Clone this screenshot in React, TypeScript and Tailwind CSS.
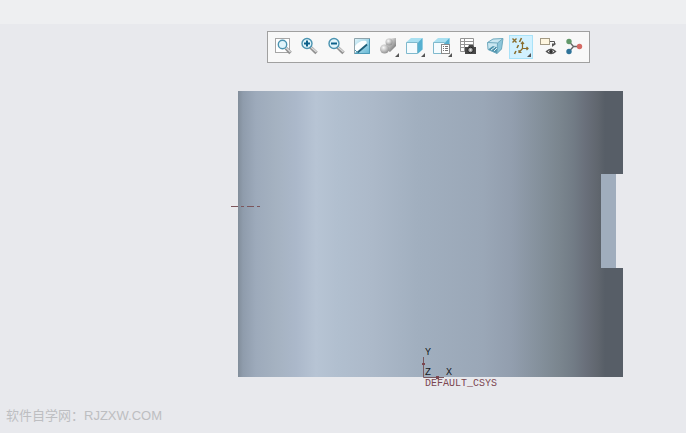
import type { ReactNode } from "react";

function Magnifier({ children, small = false }: { children?: ReactNode; small?: boolean }) {
  const cx = small ? 11.5 : 10;
  const cy = small ? 9.5 : 8.5;
  const r = small ? 4.2 : 5;
  return (
    <>
      <path d={`M${cx + 3.4} ${cy + 3.6} L19.500 18`} stroke="#8f8f8f" strokeWidth="3.400" />
      <path d={`M${cx + 3.8} ${cy + 3.4} L19.500 17`} stroke="#dcdcdc" strokeWidth="1.400" />
      <circle cx={cx} cy={cy} r={r} fill="#e2f5fb" stroke="#4b93b0" strokeWidth="1.400" />
      {children}
    </>
  );
}

function Cube() {
  return (
    <>
      <path d="M3.500 7 L8 3 H19.500 V14.500 L15 18.500 H3.500 Z" fill="#a9e0f1" />
      <path d="M15 7.500 L19.500 3 V14.500 L15 18.500 Z" fill="#56b0d0" />
      <path d="M3.500 7.500 H14.500 V18.500 H3.500 Z" fill="#f4fbfe" stroke="#7fb9cd" />
    </>
  );
}

const More = () => <path d="M22 18 V22 H18 Z" fill="#555" />;

const tools: { label: string; active?: boolean; icon: ReactNode }[] = [
  {
    label: "Refit",
    icon: (
      <>
        <rect x="4.500" y="3.500" width="14" height="14" fill="#fff" stroke="#a6a6a6" />
        <Magnifier small />
      </>
    ),
  },
  {
    label: "Zoom In",
    icon: (
      <Magnifier>
        <path d="M7 8.500 H13 M10 5.500 V11.500" stroke="#0c608a" strokeWidth="2" />
      </Magnifier>
    ),
  },
  {
    label: "Zoom Out",
    icon: (
      <Magnifier>
        <path d="M7 8.500 H13" stroke="#0c608a" strokeWidth="2" />
      </Magnifier>
    ),
  },
  {
    label: "Repaint",
    icon: (
      <>
        <rect x="4" y="3" width="16" height="16" fill="url(#repaint)" />
        <path d="M5 17 V11 C8 7 12 5 16 6 C18 8 16 11 8 17 Z" fill="#fbfeff" />
        <path d="M7 18 L17 9.500" stroke="#1d5f7a" strokeWidth="1.800" />
        <path d="M5 15 L8 18" stroke="#4f9ab5" />
        <path d="M4.500 19 V3.500 H20" stroke="#8fa3ab" />
        <path d="M19.500 4 V18.500 H5" stroke="#4e9ab6" />
      </>
    ),
  },
  {
    label: "Rendering Options",
    icon: (
      <>
        <path d="M9 8 L12 3.500 L19 3 V11 L13 17 L8 14 Z" fill="url(#shade)" />
        <circle cx="12" cy="7" r="3.500" fill="url(#sphere)" />
        <circle cx="7.500" cy="14" r="4.500" fill="url(#sphere)" />
        <More />
      </>
    ),
  },
  {
    label: "Display Style",
    icon: (
      <>
        <Cube />
        <More />
      </>
    ),
  },
  {
    label: "Saved Orientations",
    icon: (
      <>
        <Cube />
        <rect x="11.500" y="9.500" width="8" height="9" fill="#fff" stroke="#8a8a8a" />
        <path d="M13 11.500 H14 M15 11.500 H18 M13 13.500 H14 M15 13.500 H18 M13 15.500 H14 M15 15.500 H18" stroke="#777" />
        <More />
      </>
    ),
  },
  {
    label: "View Manager",
    icon: (
      <>
        <path d="M4.500 3.500 H17.500 V16.500 H4.500 Z M4.500 6.500 H17.500 M4.500 9.500 H17.500 M4.500 12.500 H17.500 M8.500 3.500 V16.500" fill="#fff" stroke="#949494" />
        <path d="M9 12 H12 L13 10 H17 L18 12 H20 V19 H9 Z" fill="#484848" />
        <circle cx="14.500" cy="15" r="2.800" fill="#a0a0a0" stroke="#222" />
        <circle cx="14.500" cy="15" r="1" fill="#e8e8e8" />
      </>
    ),
  },
  {
    label: "Perspective View",
    icon: (
      <>
        <path d="M4.500 7.500 L10 4 L20 3.500 L18.500 14 L14 18.500 L5 14.500 Z" fill="#c9e7f1" />
        <path d="M5 14.500 L10 11 L18.500 14 L14 18.500 Z" fill="#4f93ac" />
        <path d="M14.500 8 L20 3.500 L18.500 14 L14 18.500 Z" fill="#8cc6da" />
        <path d="M4.500 7.500 L10 4 L20 3.500 L18.500 14 L14 18.500 L5 14.500 Z M4.500 7.500 L14.500 8 L20 3.500 M14.500 8 L14 18.500" stroke="#6fa9be" />
        <path d="M8 15 L12 12 M11 16 L14 13" stroke="#e3f3f8" />
      </>
    ),
  },
  {
    label: "Datum Display Filters",
    active: true,
    icon: (
      <>
        <path d="M3.500 3.500 L7.500 7.500 M7.500 3.500 L3.500 7.500" stroke="#8a6d2d" strokeWidth="1.400" />
        <path d="M12.500 3 L10.500 7 M9.500 10 L8 13 M7 16 L5.500 19" stroke="#8a6d2d" strokeWidth="1.600" />
        <path d="M13.500 7 V13.500 H19 M13.500 13.500 L10 17.500 M12 9 L13.500 7 L15 9 M17.500 12 L19 13.500 L17.500 15 M10 15 V17.500 H12.500" stroke="#8a6d2d" strokeWidth="1.200" />
        <More />
      </>
    ),
  },
  {
    label: "Annotation Display",
    icon: (
      <>
        <rect x="4.500" y="3.500" width="9" height="6" fill="#fff6df" stroke="#a39a85" />
        <path d="M14 6.500 H18.500 V9" stroke="#555" />
        <path d="M16 8.500 H20 V9 L16 12 Z" fill="#555" />
        <path d="M10.500 16.500 Q15 12 19.500 16.500 Q15 20.500 10.500 16.500 Z" fill="#fff" stroke="#555" strokeWidth="1.400" />
        <circle cx="15" cy="16.500" r="1.800" fill="#333" />
      </>
    ),
  },
  {
    label: "Spin Center",
    icon: (
      <>
        <path d="M7 6.500 L11.500 11.500 H17 M11.500 11.500 L7 16.500" stroke="#666" strokeWidth="1.300" />
        <circle cx="7" cy="6.500" r="2.700" fill="#62986a" />
        <circle cx="17.500" cy="11.500" r="2.700" fill="#d56a64" />
        <circle cx="7" cy="16.500" r="2.700" fill="#2f7399" />
      </>
    ),
  },
];

function ViewToolbar() {
  return (
    <div role="toolbar" aria-label="View" className="mt-[7px] mr-24 flex w-[323px] max-w-full justify-between border border-[#a0a0a0] bg-[#f8f8f8] p-[3px]">
      {tools.map((tool) => (
        <button
          key={tool.label}
          type="button"
          aria-label={tool.label}
          aria-pressed={tool.active}
          className={tool.active ? "size-6 bg-[#d1f1ff] outline -outline-offset-1 outline-[#a9e2f8]" : "size-6 hover:bg-[#e4f6fd]"}
        >
          <svg viewBox="0 0 24 24" className="size-6" fill="none">
            {tool.icon}
          </svg>
        </button>
      ))}
    </div>
  );
}

// Shading across the cylinder, [offset in px, colour]
const shading: [number, string][] = [
  [0, "#818d9a"],
  [5, "#8f9cac"],
  [18, "#9daabb"],
  [38, "#a5b2c1"],
  [58, "#abb8ca"],
  [78, "#b7c4d4"],
  [100, "#b1bfcf"],
  [135, "#acb9c9"],
  [180, "#a1afbf"],
  [245, "#9aa7b7"],
  [274, "#929eae"],
  [304, "#838f9a"],
  [322, "#7a858e"],
  [335, "#727c86"],
  [348, "#696f7a"],
  [360, "#60666e"],
  [367, "#575e67"],
  [385, "#575e67"],
];

function Model() {
  return (
    <svg viewBox="231 91 392 300" role="img" aria-label="Cylinder model" className="mt-7 mr-[63px] h-[300px] w-[392px]">
      <defs>
        <linearGradient id="cylinder" gradientUnits="userSpaceOnUse" x1="238" x2="623" y1="0" y2="0">
          {shading.map(([x, color]) => (
            <stop key={x} offset={x / 385} stopColor={color} />
          ))}
        </linearGradient>
        <linearGradient id="repaint" x1="0" x2="1" y1="0" y2="1">
          <stop offset="0" stopColor="#e6f7fc" />
          <stop offset="1" stopColor="#5fb5d3" />
        </linearGradient>
        <linearGradient id="shade" x1="0" x2="1" y1="0" y2="1">
          <stop offset="0.200" stopColor="#ededed" />
          <stop offset="1" stopColor="#5c5c5c" />
        </linearGradient>
        <radialGradient id="sphere" cx="0.4" cy="0.35" r="0.7">
          <stop offset="0" stopColor="#fafafa" />
          <stop offset="1" stopColor="#8d8d8d" />
        </radialGradient>
      </defs>
      <path d="M238 91 H623 V174 H601 V268 H623 V377 H238 Z" fill="url(#cylinder)" />
      <rect x="601" y="174" width="15" height="94" fill="#a0adbd" />

      {/* Datum axis */}
      <path d="M231 206.500 H238 M241 206.500 H244 M247 206.500 H254 M257 206.500 H260" stroke="#7c565c" />

      {/* Coordinate system */}
      <path d="M423.500 357 V377.500 H444" fill="none" stroke="#7b5960" />
      <path d="M422 363 H425 V365 H422 Z M436 376 H439 V379 H436 Z" fill="#7b4650" />
      <g className="font-['Liberation_Mono',monospace] text-[10px]" fill="#15181c">
        <text x="425" y="355">Y</text>
        <text x="425" y="375">Z</text>
        <text x="446" y="375">X</text>
        <text x="425" y="386" fill="#7b4650">DEFAULT_CSYS</text>
      </g>
    </svg>
  );
}

export default function App() {
  return (
    <div className="flex min-h-screen flex-col bg-[#e8e9ed]">
      <header className="h-6 bg-[#eeeff1]" />
      <main className="flex flex-1 flex-col items-end">
        <ViewToolbar />
        <Model />
      </main>
      <footer className="px-[6px] pb-[7px] font-['Liberation_Sans','Noto_Sans_CJK_SC',sans-serif] text-[13px] leading-5 text-[#bdbec1]">
        软件自学网：RJZXW.COM
      </footer>
    </div>
  );
}
